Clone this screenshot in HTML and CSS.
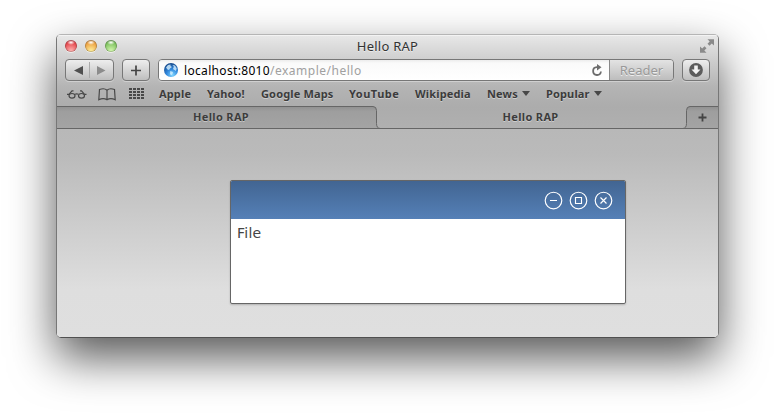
FILE: index.html
```html
<!DOCTYPE html>
<html lang="en">
<head>
<meta charset="utf-8">
<title>Hello RAP</title>
<link rel="stylesheet" href="styles.css">
</head>
<body>
<main class="browser">
  <header class="chrome">
    <div class="titlebar">
      <div class="lights"><i class="light red"></i><i class="light amber"></i><i class="light green"></i></div>
      <h1 class="title"><span>Hello RAP</span></h1>
      <svg class="expand" width="14" height="14" viewBox="0 0 14 14"><path fill="#8a8a8a" d="M7.500.3H14v6.200l-2.200-2L9.500 6.800 7.500 4.800l2.200-2.400zM0 7.500l2.200 2L4.500 7.200l2 2-2.200 2.400 2.200 2.100H0z"/></svg>
    </div>
    <div class="toolbar">
      <div class="btn nav">
        <svg width="47" height="20" viewBox="0 0 47 20"><path d="M8 10.500L17 6v9z" fill="#505050"/><path d="M23.500 2v16" stroke="#aaa"/><path d="M39.500 10.500L31 6v9z" fill="#8c8c8c"/></svg>
      </div>
      <div class="btn add"><svg width="26" height="20" viewBox="0 0 26 20"><path d="M8 10.500h10M13 5.500v10" stroke="#444" stroke-width="1.700"/></svg></div>
      <div class="address">
        <div class="url">
          <svg class="globe" width="14" height="14" viewBox="0 0 14 14">
            <defs><radialGradient id="g" cx=".6" cy=".85" r=".85"><stop offset="0" stop-color="#7fd6ff"/><stop offset=".5" stop-color="#2f86dc"/><stop offset="1" stop-color="#174889"/></radialGradient></defs>
            <circle cx="7" cy="7" r="7" fill="url(#g)"/>
            <path fill="#d8f1ff" fill-opacity=".8" d="M2 4.500L4 2l2.500-.5L6.500 3 8 4 6 5.500 5 7 3.500 6.500zM8.500 2l2.500.5 1.700 2.800-.7 2.700L10.500 7 9.500 6.500 9 5l1-1zM6.300 8l2.700 1-.5 2L7 12.500 6 10.500z"/>
          </svg>
          <span class="host">localhost:8010</span><span class="path">/example/hello</span>
          <svg class="reload" width="12" height="13" viewBox="0 0 12 13"><path d="M8 3.200H5.800A3.900 3.900 0 1 0 9.900 7.500" fill="none" stroke="#6c6c6c" stroke-width="1.800"/><path d="M6 0l4.500 3.300L6 6.500z" fill="#6c6c6c"/></svg>
        </div>
        <div class="reader">Reader</div>
      </div>
      <div class="btn download"><svg width="26" height="20" viewBox="0 0 26 20"><circle cx="13" cy="10" r="6.900" fill="#5c5c5c"/><path d="M11.200 5.500h3.600v4h2.700L13 14.300 8.500 9.500h2.700z" fill="#f3f3f3"/></svg></div>
    </div>
    <nav class="bookmarks">
      <svg width="20" height="13" viewBox="0 0 20 13" fill="none" stroke="#484848" stroke-width="1.200"><path d="M0 6.300h2M17.500 6.300h2M8 6.300q1.700-1 3.500 0M2 6.300l3-3.500h1.500M17.500 6.300l-3-3.500H13"/><ellipse cx="5" cy="7.800" rx="3" ry="2.300"/><ellipse cx="14.500" cy="7.800" rx="3" ry="2.300"/></svg>
      <svg width="18" height="13" viewBox="0 0 18 13" fill="none" stroke="#484848" stroke-width="1.200"><path d="M9 2.200C7 .4 4.500.4 1.500 1.500L.8 11.800c2.500-1.200 5.700-1.500 8.200 0 2.500-1.500 5.700-1.200 8.200 0L16.500 1.500C13.500.4 11 .4 9 2.200zM9 2.200v9.600"/></svg>
      <svg width="16" height="12" viewBox="0 0 16 12" fill="#484848"><path d="M0 0h3v2H0zM4 0h3v2H4zM8 0h3v2H8zM12 0h3v2h-3zM0 3h3v2H0zM4 3h3v2H4zM8 3h3v2H8zM12 3h3v2h-3zM0 6h3v2H0zM4 6h3v2H4zM8 6h3v2H8zM12 6h3v2h-3zM0 9h3v2H0zM4 9h3v2H4zM8 9h3v2H8zM12 9h3v2h-3z"/></svg>
      <span>Apple</span><span>Yahoo!</span><span>Google Maps</span><span class="wide">YouTube</span><span>Wikipedia</span>
      <span>News</span><i class="caret"></i><span>Popular</span><i class="caret"></i>
    </nav>
    <div class="tabs">
      <svg class="tab-shapes" width="661" height="23" viewBox="0 0 661 23">
        <defs><linearGradient id="t" x2="0" y2="1"><stop stop-color="#909090"/><stop offset=".22" stop-color="#9e9e9e"/><stop offset="1" stop-color="#a4a4a4"/></linearGradient></defs>
        <path fill="url(#t)" d="M0 .5h316q3.500 0 3.500 4v13q0 5 4 5H0zM661 .5h-28q-3.500 0-3.500 4v13q0 5-4 5H661z"/>
        <path fill="none" stroke="#666" d="M0 .5h316q3.500 0 3.500 4v13q0 5 4 5M661 .5h-28q-3.500 0-3.500 4v13q0 5-4 5M0 22.500h661"/>
      </svg>
      <span class="tab">Hello RAP</span><span class="tab">Hello RAP</span>
      <span class="new-tab"><svg width="9" height="9" viewBox="0 0 9 9"><path d="M.5 4.500h8M4.500.5v8" stroke="#444" stroke-width="1.800"/></svg></span>
    </div>
  </header>
  <section class="page">
    <article class="shell">
      <div class="shell-bar">
        <svg width="19" height="19" viewBox="0 0 19 19"><circle cx="9.500" cy="9.500" r="8.300"/><path d="M6 9.500h7"/></svg>
        <svg width="19" height="19" viewBox="0 0 19 19"><circle cx="9.500" cy="9.500" r="8.300"/><path d="M6.500 6.500h6v6h-6z"/></svg>
        <svg width="19" height="19" viewBox="0 0 19 19"><circle cx="9.500" cy="9.500" r="8.300"/><path d="M6.500 6.500l6 6M12.500 6.500l-6 6"/></svg>
      </div>
      <div class="menu">File</div>
    </article>
  </section>
</main>
</body>
</html>
```
FILE: styles.css
```css
* { box-sizing: border-box; }
body { margin: 0; width: 775px; height: 416px; padding: 34px 0 0 56px; overflow: hidden; background: #fff; font-family: "Noto Sans", "Open Sans", sans-serif; color: #3c3c3c; }
svg { display: block; flex: none; }
.browser { width: 663px; height: 304px; border: 1px solid #777; border-top-color: #b5b5b5; border-bottom-color: #505050; border-radius: 5px; overflow: hidden; box-shadow: 0 20px 46px rgba(0,0,0,.66); }
.chrome { height: 94px; background: linear-gradient(#e8e8e8, #cecece 25px, #b4b4b4 52px, #acacac 72px, #b0b0b0); box-shadow: inset 0 1px #f3f3f3; }
.titlebar { height: 24px; display: grid; grid-template-columns: 80px 1fr 80px; align-items: start; }
.lights { display: flex; gap: 8px; padding: 5px 0 0 8px; }
.light { width: 12px; height: 12px; border-radius: 50%; box-shadow: 0 1px #fff8, inset 0 0 1px 0.5px #0006; }
.red { background: radial-gradient(ellipse 4px 2.5px at 50% 20%, #fff, #fff0), radial-gradient(circle at 50% 90%, #ffb5b2, #e64a50 65%, #b72e37); }
.amber { background: radial-gradient(ellipse 4px 2.5px at 50% 20%, #fff, #fff0), radial-gradient(circle at 50% 90%, #fff09c, #eda344 65%, #b5722a); }
.green { background: radial-gradient(ellipse 4px 2.5px at 50% 20%, #fff, #fff0), radial-gradient(circle at 50% 90%, #d5f8b0, #80c361 65%, #478733); }
.title { margin: 0; font-size: 13px; line-height: 22px; font-weight: 400; letter-spacing: .25px; text-align: center; color: #333; text-shadow: 0 1px #fff8; }
.expand { justify-self: end; margin: 4px 4px 0 0; }
.toolbar { height: 22px; display: flex; gap: 8px; padding-left: 8px; }
.btn { height: 22px; border: 1px solid #777; border-radius: 4px; background: linear-gradient(#eee, #bebebe); box-shadow: 0 1px #ffffff55; }
.nav { width: 49px; }
.add, .download { width: 28px; }
.address { width: 516px; display: flex; border: 1px solid #777; border-radius: 4px; overflow: hidden; box-shadow: 0 1px #ffffff55; }
.url { width: 450px; display: flex; align-items: center; padding-left: 5px; background: linear-gradient(#ececec, #fafafa 3px, #fff); font-size: 12px; line-height: 20px; }
.globe { margin-right: 6px; }
.host, .path { padding-top: 1px; }
.host { color: #000; letter-spacing: .33px; }
.path { color: #a0a0a0; letter-spacing: .5px; }
.reload { margin: 0 6px 0 auto; }
.reader { flex: 1; border-left: 1px solid #888; background: linear-gradient(#e3e3e3, #bdbdbd); color: #999; font-size: 13px; line-height: 20px; text-align: center; text-shadow: 0 1px #eee; }
.bookmarks { height: 25px; padding: 1px 0 0 10px; display: grid; grid-template-columns: 31px 31px 30px 48px 54px 88px 66px 72px 35px 24px 48px 10px; align-items: center; font-size: 11px; line-height: 20px; font-weight: 700; letter-spacing: .15px; white-space: nowrap; text-shadow: 0 1px #ffffff66; }
.wide { letter-spacing: .5px; }
.caret { border: 4px solid transparent; border-top: 5px solid #484848; border-bottom: 0; width: 8px; margin-top: -2px; }
.tabs { height: 23px; position: relative; display: grid; grid-template-columns: 319px 310px 32px; font-size: 11px; font-weight: 700; line-height: 22px; letter-spacing: .35px; text-align: center; text-shadow: 0 1px #ffffff66; }
.tab-shapes { position: absolute; inset: 0; }
.tab { position: relative; padding-left: 9px; }
.tab + .tab { padding-left: 0; padding-right: 1px; }
.new-tab { position: relative; display: grid; place-items: center; }
.page { height: 208px; padding: 51px 0 0 173px; background: linear-gradient(#b8b8b8, #bababa 25px, #dedede 160px, #dfdfdf); }
.shell { width: 396px; height: 124px; border: 1px solid #666; border-radius: 2px; background: #fff; overflow: hidden; box-shadow: 0 1px 2px #0003; }
.shell-bar { height: 38px; display: flex; align-items: flex-start; justify-content: flex-end; gap: 6px; padding: 10px 12px 0 0; background: linear-gradient(#426592, #5580b7); }
.shell-bar svg { fill: none; stroke: #fff; stroke-width: 1.15; }
.menu { padding: 4px 6px; font: 14px/20px "DejaVu Sans", sans-serif; letter-spacing: .25px; color: #444; }
```
